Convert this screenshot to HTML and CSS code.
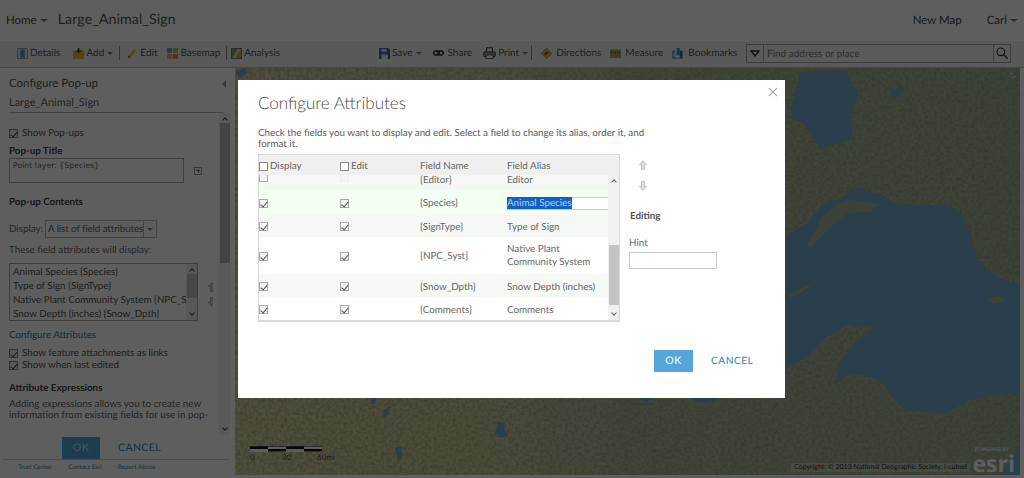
FILE: index.html
```html
<!DOCTYPE html>
<html lang="en">
<head>
<meta charset="utf-8">
<title>Configure Attributes</title>
<link rel="stylesheet" href="styles.css">
</head>
<body>
<div class="app">
  <header class="topbar">
    <div class="topbar-left">
      <span class="home">Home</span><span class="caret caret-home"></span>
      <span class="map-title">Large_Animal_Sign</span>
    </div>
    <div class="topbar-right">
      <span class="new-map">New Map</span>
      <span class="avatar"></span>
      <span class="user">Carl</span><span class="caret caret-user"></span>
    </div>
  </header>

  <nav class="toolbar">
    <div class="tools tools-left">
      <span class="tool"><svg class="ico" viewBox="0 0 12 12"><rect x=".5" y=".5" width="11" height="11" rx="1" fill="#dfe8f2" stroke="#7f8fa0"/><rect x="3.5" y="1.5" width="5" height="9" fill="#5f93c8"/></svg>Details</span>
      <span class="tool tool-add"><svg class="ico" viewBox="0 0 12 12"><path d="M0 3h4l1-1h7v10H0z" fill="#e8b93a"/><path d="M6 0v6M3.5 3.5h5" stroke="#3b3b3b" stroke-width="1.6"/></svg>Add<span class="caret caret-tool"></span></span>
      <span class="sep sep-a"></span>
      <span class="tool tool-edit"><svg class="ico" viewBox="0 0 12 12"><path d="M1 11l1-3 6-7 2 2-6 7z" fill="#e8b93a"/><path d="M1 11l1-3 2 2z" fill="#555"/></svg>Edit</span>
      <span class="tool tool-basemap"><svg class="ico" viewBox="0 0 12 12"><rect width="5.5" height="5.5" fill="#6f9fd0"/><rect x="6.5" width="5.5" height="5.5" fill="#9fc26e"/><rect y="6.5" width="5.5" height="5.5" fill="#e3b54d"/><rect x="6.5" y="6.5" width="5.5" height="5.5" fill="#d58f4e"/></svg>Basemap</span>
      <span class="sep sep-b"></span>
      <span class="tool"><svg class="ico" viewBox="0 0 12 12"><rect x=".5" y=".5" width="11" height="11" fill="#cfd8c5" stroke="#6f6f6f"/><path d="M1 1h6L3 8 1 11z" fill="#7fa85e"/><path d="M11 1 5 11h6z" fill="#d9a544"/></svg>Analysis</span>
    </div>
    <div class="tools tools-right">
      <span class="tool"><svg class="ico" viewBox="0 0 12 12"><path d="M0 0h10l2 2v10H0z" fill="#4b5aa8"/><rect x="2.5" y="1" width="6" height="3.5" fill="#dcdcdc"/><rect x="2.5" y="7" width="7" height="5" fill="#e8e8e8"/></svg>Save<span class="caret caret-tool"></span></span>
      <span class="tool tool-share"><svg class="ico ico-share" viewBox="0 0 12 6"><rect x=".8" y=".8" width="6" height="4.4" rx="2.2" fill="none" stroke="#2c2c2c" stroke-width="1.5"/><rect x="5.2" y=".8" width="6" height="4.4" rx="2.2" fill="none" stroke="#2c2c2c" stroke-width="1.5"/></svg>Share</span>
      <span class="tool tool-print"><svg class="ico ico-print" viewBox="0 0 13 12"><path d="M3.5 5V.8h6V5" fill="#eee" stroke="#333"/><rect x=".7" y="5" width="11.6" height="4.6" rx="1" fill="#aaa" stroke="#333"/><rect x="3" y="8" width="7" height="3.4" fill="#fff" stroke="#333" stroke-width=".8"/></svg>Print<span class="caret caret-tool"></span></span>
      <span class="sep sep-c"></span>
      <span class="tool tool-dir"><svg class="ico" viewBox="0 0 12 12"><rect x="2" y="2" width="8" height="8" transform="rotate(45 6 6)" fill="#f2c230" stroke="#555" stroke-width=".7"/><path d="M4.500 8V5.500H7M6 4l1.800 1.500L6 7" fill="none" stroke="#333" stroke-width="1"/></svg>Directions</span>
      <span class="tool tool-measure"><svg class="ico" viewBox="0 0 12 12"><rect y="1.500" width="12" height="9.500" fill="#8fb56a"/><rect x="1" y="4" width="10" height="4" fill="#cf8d5a"/><path d="M2 4v2M4 4v1.400M6 4v2M8 4v1.400M10 4v2" stroke="#333" stroke-width=".7"/></svg>Measure</span>
      <span class="tool tool-book"><svg class="ico" viewBox="0 0 12 12"><path d="M.5 3h3v7.500H8.500V3h3v8.500H.5z" fill="#2d6aa8"/><rect x="5" y="0" width="3.500" height="8" fill="#4c86c4"/><rect x="1.500" y="4" width="3" height="6" fill="#d7e4f2"/></svg>Bookmarks</span>
    </div>
    <div class="search">
      <span class="search-drop"><svg class="search-tri" viewBox="0 0 10 7"><path d="M1 1H9L5 6Z" fill="none" stroke="#2a2a2a" stroke-width="1.300"/></svg></span>
      <span class="search-input">Find address or place</span>
      <span class="search-btn"><svg class="ico-search" viewBox="0 0 12 12"><circle cx="4.800" cy="4.800" r="3.800" fill="none" stroke="#2a2a2a" stroke-width="1.100"/><path d="M7.600 7.600 11.500 11.500" stroke="#2a2a2a" stroke-width="1.300"/></svg></span>
    </div>
  </nav>

  <main class="workspace">
    <aside class="panel">
      <div class="panel-head">
        <div class="panel-title-row"><h2 class="panel-title">Configure Pop-up</h2><span class="collapse"></span></div>
        <div class="panel-layer">Large_Animal_Sign</div>
      </div>
      <div class="panel-scroll">
        <div class="panel-body">
          <label class="check-row check-first"><span class="cb cb-on"></span>Show Pop-ups</label>
          <h3 class="label label-title">Pop-up Title</h3>
          <div class="title-row">
            <div class="textarea">Point layer: {Species}</div>
            <span class="plus-btn"></span>
          </div>
          <h3 class="label label-contents">Pop-up Contents</h3>
          <div class="display-row">
            <span>Display:</span>
            <span class="select"><span class="select-text">A list of field attributes</span><span class="select-arrow"><span class="caret caret-tool"></span></span></span>
          </div>
          <p class="fields-note">These field attributes will display:</p>
          <div class="list-row">
            <div class="listbox">
              <ul class="list-items">
                <li>Animal Species {Species}</li>
                <li>Type of Sign {SignType}</li>
                <li>Native Plant Community System {NPC_Syst}</li>
                <li>Snow Depth (inches) {Snow_Dpth}</li>
              </ul>
              <div class="list-scroll"><span class="chev chev-up"></span><span class="list-thumb"></span><span class="chev chev-down"></span></div>
            </div>
            <div class="list-arrows">
              <svg class="arrow-ico" viewBox="0 0 10 12"><path d="M5 .5 9.500 5.500H7V11.500H3V5.500H.5z" fill="#cfcfcf" stroke="#9a9a9a"/></svg>
              <svg class="arrow-ico" viewBox="0 0 10 12"><path d="M5 11.500 9.500 6.500H7V.5H3V6.500H.5z" fill="#cfcfcf" stroke="#9a9a9a"/></svg>
            </div>
          </div>
          <a class="link">Configure Attributes</a>
          <label class="check-row check-attach"><span class="cb cb-on"></span>Show feature attachments as links</label>
          <label class="check-row check-edited"><span class="cb cb-on"></span>Show when last edited</label>
          <h3 class="label label-expr">Attribute Expressions</h3>
          <p class="expr-note">Adding expressions allows you to create new information from existing fields for use in pop-</p>
        </div>
        <div class="panel-scrollbar"><span class="chev chev-up"></span><span class="panel-thumb"></span><span class="chev chev-down"></span></div>
      </div>
      <div class="panel-actions"><span class="btn btn-ok">OK</span><span class="btn-text">CANCEL</span></div>
      <footer class="panel-footer"><span>Trust Center</span><span>Contact Esri</span><span>Report Abuse</span></footer>
    </aside>

    <section class="map">
      <svg class="map-svg" viewBox="235 68 785 407" preserveAspectRatio="none" aria-hidden="true">
        <defs>
          <linearGradient id="land" x1="0" x2="1" y1="0" y2="0">
            <stop offset="0" stop-color="#d8d2a0"/>
            <stop offset=".36" stop-color="#cdca9c"/>
            <stop offset=".5" stop-color="#aebb98"/>
            <stop offset="1" stop-color="#a0b498"/>
          </linearGradient>
          <filter id="grain" x="0" y="0" width="100%" height="100%">
            <feTurbulence type="fractalNoise" baseFrequency=".32" numOctaves="3" seed="7"/>
            <feColorMatrix values="0 0 0 0 .2  0 0 0 0 .24  0 0 0 0 .16  0 0 0 1 -.36"/>
          </filter>
        </defs>
        <rect x="235" y="68" width="785" height="407" fill="url(#land)"/>
        <rect x="235" y="68" width="785" height="407" filter="url(#grain)"/>
        <g fill="#72a8cc">
          <path d="M792 105 800 72 845 70 858 92 851 118 852 140 820 148 805 125 792 118Z"/>
          <path d="M890 94 900 86 906 88 898 98Z"/>
          <path d="M785 237 807 223 820 207 830 200 842 200 850 190 860 188 880 195 893 202 913 205 943 205 957 209 967 227 977 257 987 270 1007 282 1020 283 1020 394 993 395 967 400 947 413 927 412 907 410 897 403 883 382 867 375 847 375 835 385 840 363 853 343 877 327 847 325 827 337 807 357 785 369Z"/>
          <path d="M498 422 504 423 505 431 508 436 500 438 495 432Z"/>
          <path d="M1000 475 1020 445 1020 475Z"/>
          <path d="M372 398 376 398 375 404 371 403Z"/>
          <path d="M384 410 390 406 388 415 382 418Z"/>
          <path d="M640 398 650 398 646 404Z"/>
          <path d="M395 448 401 447 402 458 398 460Z"/>
          <path d="M690 398 720 398 712 402 697 402Z"/>
          <path d="M235 72 245 68 248 72 240 78Z"/>
        </g>
        <g fill="#a0b498">
          <path d="M788 295 815 282 830 270 823 277 805 290 790 298Z"/>
          <path d="M987 299 1000 296 1006 300 995 304Z"/>
          <path d="M806 247 822 217 835 205 850 200 880 204 870 212 848 213 825 232 812 247Z"/>
        </g>
        <g>
          <rect x="250" y="446" width="72" height="6" fill="#fff"/>
          <rect x="250" y="446" width="72" height=".8" fill="#555"/>
          <rect x="250" y="446.500" width="18" height="2.500" fill="#111"/>
          <rect x="268" y="449" width="18" height="2.500" fill="#111"/>
          <rect x="286" y="446.500" width="18" height="2.500" fill="#111"/>
          <rect x="304" y="449" width="18" height="2.500" fill="#111"/>
        </g>
      </svg>
      <span class="scale-label scale-0">0</span>
      <span class="scale-label scale-30">30</span>
      <span class="scale-label scale-60">60mi</span>
      <svg class="map-expand" viewBox="0 0 10 10"><rect x=".5" y=".5" width="9" height="9" fill="#ccc" stroke="#999"/><path d="M2 8 8 2M4.500 2H8V5.500" stroke="#666" fill="none"/></svg>
      <span class="copyright">Copyright: © 2013 National Geographic Society, i-cubed</span>
      <span class="esri"><span class="powered">POWERED BY</span><span class="esri-word">esri</span></span>
    </section>
  </main>
</div>

<div class="overlay">
  <div class="dialog" role="dialog">
    <button class="close" aria-label="Close"><svg viewBox="0 0 10 10"><path d="M1 1 9 9M9 1 1 9" stroke="#aaa" stroke-width="1.100" fill="none"/></svg></button>
    <h1 class="dialog-title">Configure Attributes</h1>
    <p class="dialog-note">Check the fields you want to display and edit. Select a field to change its alias, order it, and format it.</p>
    <div class="dialog-main">
      <div class="grid">
        <div class="grid-head row">
          <span class="c-check"><span class="hcb"></span>Display</span>
          <span class="c-check"><span class="hcb"></span>Edit</span>
          <span>Field Name</span>
          <span>Field Alias</span>
        </div>
        <div class="grid-body">
          <div class="grid-rows">
            <div class="row row-editor tint"><span class="c-check"><span class="tcb"></span></span><span class="c-check"><span class="tcb tcb-off"></span></span><span>{Editor}</span><span>Editor</span></div>
            <div class="row row-species"><span class="c-check"><span class="tcb on"></span></span><span class="c-check"><span class="tcb on"></span></span><span>{Species}</span><span class="alias-input"><span class="selected">Animal Species</span></span></div>
            <div class="row row-std tint"><span class="c-check"><span class="tcb on"></span></span><span class="c-check"><span class="tcb on"></span></span><span>{SignType}</span><span>Type of Sign</span></div>
            <div class="row row-tall"><span class="c-check"><span class="tcb on"></span></span><span class="c-check"><span class="tcb on"></span></span><span>{NPC_Syst}</span><span>Native Plant<br>Community System</span></div>
            <div class="row row-std tint"><span class="c-check"><span class="tcb on"></span></span><span class="c-check"><span class="tcb on"></span></span><span>{Snow_Dpth}</span><span>Snow Depth (inches)</span></div>
            <div class="row row-std"><span class="c-check"><span class="tcb on"></span></span><span class="c-check"><span class="tcb on"></span></span><span>{Comments}</span><span>Comments</span></div>
          </div>
          <div class="grid-scroll"><span class="chev chev-up"></span><span class="grid-thumb"></span><span class="chev chev-down"></span></div>
        </div>
      </div>
      <div class="side">
        <div class="order">
          <svg class="arrow-ico" viewBox="0 0 10 12"><path d="M5 .5 9.500 5.500H7V11.500H3V5.500H.5z" fill="#dcdcdc" stroke="#b8b8b8"/></svg>
          <svg class="arrow-ico" viewBox="0 0 10 12"><path d="M5 11.500 9.500 6.500H7V.5H3V6.500H.5z" fill="#dcdcdc" stroke="#b8b8b8"/></svg>
        </div>
        <h3 class="side-head">Editing</h3>
        <div class="side-label">Hint</div>
        <div class="side-input"></div>
      </div>
    </div>
    <div class="dialog-actions"><span class="btn btn-ok-light">OK</span><span class="btn-text btn-cancel-light">CANCEL</span></div>
  </div>
</div>
</body>
</html>
```
FILE: styles.css
```css
* { box-sizing: border-box; }
html, body { margin: 0; height: 100%; overflow: hidden; }
body { font-family: Lato, "Open Sans", sans-serif; font-size: 9.800px; color: #4c4c4c; background: #fff; text-rendering: geometricPrecision; }
h1, h2, h3, p, ul { margin: 0; padding: 0; font-weight: 400; }
ul { list-style: none; }

.app { height: 478px; display: flex; flex-direction: column; background: #fff; }

.topbar { height: 41px; display: flex; justify-content: space-between; align-items: center; padding: 0 6px 0 6px; color: #444; }
.topbar-left, .topbar-right { display: flex; align-items: center; }
.home { font-size: 11.500px; }
.map-title { font-size: 14.200px; margin-left: 10px; letter-spacing: .1px; color: #555; margin-top: -3px; }
.new-map { font-size: 11.500px; }
.avatar { width: 10px; height: 11px; margin: -3px 4px 0 11px; background: #fff; opacity: .6; }
.user { font-size: 11.500px; }
.caret { display: inline-block; width: 0; height: 0; border-left: 3px solid transparent; border-right: 3px solid transparent; border-top: 3px solid #777; }
.caret-home { margin-left: 3px; border-left-width: 4px; border-right-width: 4px; }
.caret-user { margin-left: 3px; border-left-width: 4px; border-right-width: 4px; }
.caret-tool { margin-left: 3px; vertical-align: middle; }

.toolbar { height: 27px; display: flex; align-items: center; padding: 0 0 2px 17px; border-bottom: 1px solid #c0c0c0; background: #f2f2f2; font-size: 10px; color: #555; }
.tools { display: flex; align-items: center; flex: none; }
.tools-left { width: 362px; }
.tools-right { width: 367px; }
.tool { display: inline-flex; align-items: center; white-space: nowrap; }
.ico { width: 11px; height: 11px; margin-right: 2px; flex: none; }
.ico-share { width: 11px; height: 6px; margin-right: 4px; }
.ico-print { width: 13px; height: 12px; margin-right: 2px; }
.tool-add { margin-left: 13px; }
.sep { width: 1px; height: 14px; background: #8a8a8a; flex: none; }
.sep-a { margin: 0 7px 0 6px; }
.tool-edit { margin-right: 10px; }
.sep-b { margin: 0 4px 0 6px; }
.tool-share { margin-left: 11px; }
.tool-print { margin-left: 11px; }
.sep-c { margin: 0 9px 0 3px; }
.tool-dir .ico { margin-right: 4px; }
.tool-measure { margin-left: 9px; }
.tool-measure .ico { margin-right: 4px; }
.tool-book { margin-left: 9px; }
.tool-book .ico { margin-right: 5px; }
.search { width: 265px; height: 19px; display: flex; border: 1px solid #a9a9a9; background: #f4f4f4; flex: none; }
.search-drop { width: 17px; border-right: 1px solid #a9a9a9; display: flex; align-items: center; justify-content: center; }
.search-tri { width: 10px; height: 7px; }
.search-input { flex: 1; padding-left: 3px; line-height: 18px; color: #7d7d7d; font-size: 10px; }
.search-btn { width: 17px; border-left: 1px solid #a9a9a9; display: flex; align-items: center; justify-content: center; }
.ico-search { width: 12px; height: 12px; }

.workspace { height: 407px; flex: none; display: flex; padding: 0 4px 0 3px; background: #fff; }

.panel { width: 232px; flex: none; display: flex; flex-direction: column; background: #fff; }
.panel-head { height: 45px; margin: 0 12px 0 6px; border-bottom: 1px solid #bbb; }
.panel-title-row { display: flex; justify-content: space-between; align-items: center; height: 30px; padding-top: 1px; }
.panel-title { font-size: 11.500px; color: #555; }
.collapse { width: 0; height: 0; margin-right: -3px; border-top: 4px solid transparent; border-bottom: 4px solid transparent; border-right: 4px solid #999; }
.panel-layer { font-size: 11px; line-height: 14px; margin-top: -2px; color: #666; }
.panel-scroll { flex: none; height: 322px; display: flex; }
.panel-body { width: 210px; overflow: hidden; padding-left: 6px; flex: none; }
.panel-scrollbar { width: 11px; margin-left: 6px; display: flex; flex-direction: column; align-items: center; background: #f0f0f0; }
.panel-thumb { width: 10px; height: 140px; background: #b5b5b5; }
.panel-scrollbar .chev-down { margin-top: auto; }

.check-row { display: flex; align-items: center; color: #555; line-height: 12px; }
.check-first { margin-top: 14px; }
.cb { width: 9px; height: 9px; border: 1px solid #888; margin-right: 4px; position: relative; background: #eee; flex: none; }
.cb-on::after, .tcb.on::after { content: ""; position: absolute; left: 2px; top: 0; width: 3px; height: 6px; border: solid #555; border-width: 0 1px 1px 0; transform: rotate(40deg); }

.label { font-weight: 700; font-size: 9.800px; color: #444; line-height: 14px; }
.label-title { margin-top: 5px; }
.title-row { display: flex; align-items: center; }
.textarea { width: 175px; height: 25px; border: 1px solid #aaa; padding: 1px 3px; font-family: "DejaVu Sans", sans-serif; font-size: 7.800px; line-height: 11px; color: #666; background: #fff; }
.plus-btn { width: 8px; height: 8px; border: 1px solid #999; margin-left: 10px; position: relative; }
.plus-btn::before { content: ""; position: absolute; left: 1px; right: 1px; top: 2.500px; height: 1px; background: #777; }
.plus-btn::after { content: ""; position: absolute; top: 1px; bottom: 1px; left: 2.500px; width: 1px; background: #777; }
.label-contents { margin-top: 12px; }
.display-row { display: flex; align-items: center; margin-top: 11px; color: #666; }
.select { display: flex; height: 18px; width: 112px; margin-left: 2px; border: 1px solid #bbb; }
.select-text { flex: 1; padding-left: 2px; line-height: 17px; white-space: nowrap; overflow: hidden; letter-spacing: -.1px; }
.select-arrow { width: 13px; border-left: 1px solid #bbb; display: flex; align-items: center; justify-content: center; }
.select-arrow .caret { margin: 0; }
.fields-note { margin-top: 5px; line-height: 14px; color: #666; }
.list-row { display: flex; margin-top: 6px; }
.listbox { width: 189px; height: 58px; border: 1px solid #aaa; display: flex; background: #fff; }
.list-items { flex: 1; min-width: 0; overflow: hidden; padding: 1px 0 0 3px; line-height: 14px; white-space: nowrap; color: #555; }
.list-scroll { width: 11px; flex: none; display: flex; flex-direction: column; align-items: center; background: #eee; }
.list-thumb { width: 10px; height: 24px; background: #c0c0c0; }
.list-scroll .chev-down { margin-top: auto; }
.list-arrows { display: flex; flex-direction: column; gap: 5px; margin: 19px 0 0 10px; }
.arrow-ico { width: 8px; height: 10px; display: block; }
.link { display: block; margin-top: 7px; line-height: 14px; color: #277ea8; }
.check-attach { margin-top: 5px; }
.check-edited { margin-top: 0; }
.label-expr { margin-top: 10px; }
.expr-note { margin-top: 4px; line-height: 11px; width: 204px; color: #666; }

.chev { width: 4px; height: 4px; border: solid #444; border-width: 1px 0 0 1px; flex: none; }
.chev-up { transform: rotate(45deg); margin: 5px 0 1px; }
.chev-down { transform: rotate(225deg); margin: 1px 0 5px; }

.panel-actions { height: 25px; padding: 1px 0 0 59px; margin: 0 6px 0 0; border-bottom: 1px solid #ccc; display: flex; align-items: center; }
.btn { display: inline-flex; align-items: center; justify-content: center; color: #fff; }
.btn-ok { width: 38px; height: 22px; background: #56a5d8; font-size: 10.500px; letter-spacing: .5px; color: #cfe4f2; }
.btn-text { color: #1c87c0; font-size: 10.500px; letter-spacing: .4px; margin-left: 18px; }
.panel-footer { height: 15px; display: flex; gap: 16px; padding-left: 15px; align-items: center; font-size: 6.300px; color: #3e86b2; background: #fff; flex: none; }

.map { flex: 1; position: relative; overflow: hidden; }
.map-svg { display: block; width: 100%; height: 100%; }
.scale-label { position: absolute; top: 384px; font-size: 8px; color: #555; }
.scale-0 { left: 15px; }
.scale-30 { left: 47px; }
.scale-60 { left: 82px; }
.map-expand { position: absolute; top: 3px; right: 3px; width: 8px; height: 8px; opacity: .7; }
.copyright { position: absolute; right: 50px; bottom: 3px; height: 9px; padding: 0 3px; line-height: 9px; font-size: 7px; color: #333; background: rgba(255, 255, 255, .3); white-space: nowrap; }
.esri { position: absolute; right: 5px; bottom: 3px; display: flex; flex-direction: column; align-items: flex-end; color: #fff; }
.powered { font-size: 5px; line-height: 5px; letter-spacing: .2px; margin: 0 6px 1px 0; }
.esri-word { font-size: 23px; line-height: 18px; font-weight: 700; font-family: "Open Sans", sans-serif; }

.overlay { position: fixed; inset: 0; display: flex; align-items: center; justify-content: center; background: rgba(0, 0, 0, .63); }
.dialog { width: 547px; height: 318px; background: #fff; position: relative; padding: 13px 0 0 20px; margin-right: 1px; }
.close { position: absolute; top: 7px; right: 7px; width: 10px; height: 10px; border: 0; padding: 0; background: none; }
.close svg { display: block; width: 10px; height: 10px; }
.dialog-title { font-size: 17px; line-height: 20px; color: #4c4c4c; font-weight: 300; }
.dialog-note { margin-top: 15px; width: 410px; line-height: 11px; font-size: 9.800px; color: #595959; }
.dialog-main { display: flex; margin-top: 4px; }
.grid { width: 362px; height: 168px; border: 1px solid #d8d8d8; border-bottom-width: 2px; display: flex; flex-direction: column; }
.row { display: grid; grid-template-columns: 81px 80px 87px 1fr; align-items: center; font-size: 9.800px; color: #666; }
.grid-head { height: 20px; background: #efefef; flex: none; position: relative; z-index: 1; padding-top: 2px; }
.c-check { display: flex; align-items: center; }
.hcb { width: 9px; height: 9px; border: 1px solid #888; background: #fff; margin-right: 2px; }
.grid-body { flex: 1; display: flex; min-height: 0; }
.grid-rows { flex: 1; min-width: 0; overflow: hidden; }
.row-editor { height: 21px; margin-top: -6px; }
.row-editor .tcb { margin-top: -4px; }
.row-species { height: 24px; background: #f3fff1; padding-top: 2px; }
.row-std { height: 23px; padding-top: 2px; }
.row-tall { height: 37px; line-height: 13px; padding-top: 1px; }
.tint { background: #f6f8f6; }
.tcb { width: 9px; height: 9px; border: 1px solid #aaa; background: #f4f4f4; position: relative; display: block; }
.tcb-off { border-color: #eee; background: #f4f4f4; }
.alias-input { border-top: 1px solid #ccc; border-bottom: 1px solid #ccc; height: 13px; line-height: 11px; background: #fff; display: block; }
.selected { background: #0f62c4; color: #b9cfe6; }
.grid-scroll { width: 11px; flex: none; display: flex; flex-direction: column; align-items: center; background: #f0f0f0; }
.grid-thumb { width: 10px; height: 60px; margin-top: 60px; background: #c4c4c4; }
.grid-scroll .chev-down { margin-top: auto; }
.grid-scroll .chev { border-color: #666; }
.side { padding-left: 9px; }
.order { display: flex; flex-direction: column; gap: 11px; padding: 6px 0 0 10px; }
.side-head { margin: 18px 0 0 1px; font-weight: 700; font-size: 9.800px; line-height: 14px; color: #555; }
.side-label { margin-top: 14px; line-height: 13px; color: #666; }
.side-input { width: 88px; height: 17px; margin-top: 2px; border: 1px solid #ccc; }
.dialog-actions { display: flex; align-items: center; margin: 28px 0 0 396px; }
.btn-ok-light { background: #56a5d8; font-size: 10.500px; width: 39px; height: 22px; letter-spacing: .5px; }
.btn-cancel-light { color: #1c87c0; font-size: 10px; letter-spacing: .6px; }
```
